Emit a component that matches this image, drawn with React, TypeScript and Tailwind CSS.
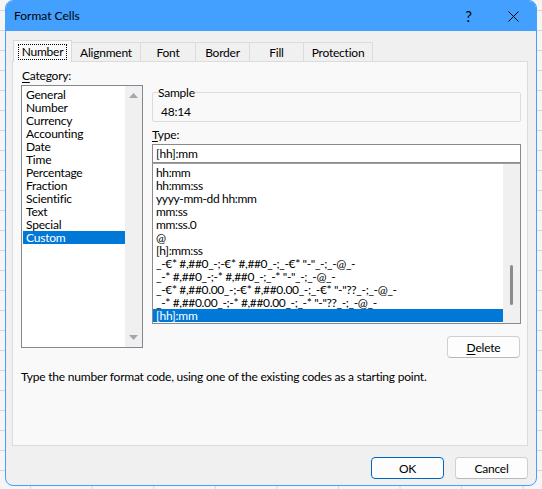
import type { ReactNode } from "react";

const categories = [
  "General",
  "Number",
  "Currency",
  "Accounting",
  "Date",
  "Time",
  "Percentage",
  "Fraction",
  "Scientific",
  "Text",
  "Special",
  "Custom",
];

const typeCodes = [
  "hh:mm",
  "hh:mm:ss",
  "yyyy-mm-dd hh:mm",
  "mm:ss",
  "mm:ss.0",
  "@",
  "[h]:mm:ss",
  '_-€* #,##0_-;-€* #,##0_-;_-€* "-"_-;_-@_-',
  '_-* #,##0_-;-* #,##0_-;_-* "-"_-;_-@_-',
  '_-€* #,##0.00_-;-€* #,##0.00_-;_-€* "-"??_-;_-@_-',
  '_-* #,##0.00_-;-* #,##0.00_-;_-* "-"??_-;_-@_-',
  "[hh]:mm",
];

const tabs = [
  { label: "Number", width: "w-[59px]" },
  { label: "Alignment", width: "w-[70px]" },
  { label: "Font", width: "w-[56px]" },
  { label: "Border", width: "w-[55px]" },
  { label: "Fill", width: "w-[55px]" },
  { label: "Protection", width: "w-[70px]" },
];

function Key({ children }: { children: ReactNode }) {
  return <span className="underline underline-offset-[2px]">{children}</span>;
}

function DialogButton({
  children,
  primary,
}: {
  children: ReactNode;
  primary?: boolean;
}) {
  return (
    <button
      className={
        primary
          ? "flex h-[22px] w-[73px] items-center justify-center rounded-[4px] border border-[#0067c0] bg-[#fdfdfd] leading-[13px]"
          : "flex h-[22px] w-[73px] items-center justify-center rounded-[4px] border border-[#d0d0d0] border-b-[#b9b9b9] bg-[#fdfdfd] leading-[13px]"
      }
    >
      {children}
    </button>
  );
}

export default function App() {
  return (
    <div className="h-[489px] w-[542px] overflow-hidden bg-[#f5f5f5] bg-[linear-gradient(to_bottom,#d6d6d6_1px,transparent_1px),linear-gradient(to_right,#d6d6d6_1px,transparent_1px)] bg-size-[61.6px_20px] bg-position-[30px_10px] px-[5px] font-['Segoe_UI',Lato,sans-serif] text-[12px] tracking-[-0.22px] text-black">
      <div className="flex h-[486px] w-[532px] flex-col overflow-hidden rounded-[8px] border border-[#43a0fe] bg-[#f0f0f0]">
        {/* Title bar */}
        <div className="flex h-[30px] shrink-0 items-center bg-[#43a0fe] pl-[8px]">
          <span className="text-[12px] tracking-normal">Format Cells</span>
          <span className="ml-auto flex w-[45px] justify-center text-[15px] leading-none">?</span>
          <span className="flex w-[45px] justify-center">
            <svg width="11" height="11" viewBox="0 0 11 11">
              <path d="M0.5 0.5 L10.5 10.5 M10.5 0.5 L0.5 10.5" stroke="#000" strokeWidth="1" />
            </svg>
          </span>
        </div>

        {/* Tabs */}
        <div className="mt-[9px] flex h-[21px] items-end pl-[7px]">
          {tabs.map((t, i) =>
            i === 0 ? (
              <div
                key={t.label}
                className={`relative z-10 mb-[-1px] flex h-[22px] ${t.width} items-center justify-center border border-b-0 border-[#d9d9d9] bg-[#f9f9f9]`}
              >
                <span className="border border-dotted border-black px-[3px] leading-[14px]">
                  {t.label}
                </span>
              </div>
            ) : (
              <div
                key={t.label}
                className={`-ml-px flex h-[19px] ${t.width} items-center justify-center border border-b-0 border-[#dcdcdc] bg-[#f0f0f0] leading-[13px]`}
              >
                {t.label}
              </div>
            ),
          )}
        </div>

        {/* Tab panel */}
        <div className="ml-[6px] mr-[8px] flex h-[385px] flex-col border border-[#dcdcdc] bg-[#f9f9f9] pl-[8px] pt-[7px]">
          <div className="flex items-start">
            {/* Category */}
            <div className="w-[122px]">
              <div className="h-[13px] pl-[1px] leading-[13px]">
                <Key>C</Key>ategory:
              </div>
              <div className="mt-[3px] flex h-[263px] border border-[#828790] bg-white">
                <div className="flex-1 pl-[1px] pt-[2px]">
                  {categories.map((c) => (
                    <div
                      key={c}
                      className={
                        c === "Custom"
                          ? "h-[13px] bg-[#0078d7] pl-[3px] leading-[13px] text-white"
                          : "h-[13px] pl-[3px] leading-[13px]"
                      }
                    >
                      {c}
                    </div>
                  ))}
                </div>
                <div className="flex w-[17px] flex-col items-center justify-between bg-[#f0f0f0] py-[7px]">
                  <svg width="9" height="5" viewBox="0 0 9 5">
                    <path d="M4.5 0 L9 5 L0 5 Z" fill="#a6a6a6" />
                  </svg>
                  <svg width="9" height="5" viewBox="0 0 9 5">
                    <path d="M0 0 L9 0 L4.5 5 Z" fill="#a6a6a6" />
                  </svg>
                </div>
              </div>
            </div>

            {/* Sample + Type */}
            <div className="ml-[9px] mt-[17px] flex w-[369px] flex-col">
              <fieldset className="rounded-[2px] border border-[#dcdcdc] pb-[3px] pl-[5px]">
                <legend className="leading-[13px]">Sample</legend>
                <div className="pl-[3px] pt-[6px] leading-[13px]">48:14</div>
              </fieldset>

              <div className="mt-[6px] h-[13px] leading-[13px]">
                <Key>T</Key>ype:
              </div>
              <div className="mt-[3px] flex h-[19px] items-center border border-[#8a8a8a] bg-white pl-[3px]">
                [hh]:mm
              </div>
              <div className="flex h-[161px] border border-[#8a8a8a] border-t-[#a0a0a0] bg-white">
                <div className="flex-1 overflow-hidden pt-[2px]">
                  {typeCodes.map((code, i) => (
                    <div
                      key={code}
                      className={
                        i === typeCodes.length - 1
                          ? "h-[13px] whitespace-pre bg-[#0078d7] pl-[3px] leading-[13px] text-white"
                          : "h-[13px] whitespace-pre pl-[3px] leading-[13px] tracking-[-0.35px]"
                      }
                    >
                      {code}
                    </div>
                  ))}
                </div>
                <div className="flex w-[17px] flex-col items-center bg-[#f0f0f0] pt-[101px]">
                  <div className="h-[40px] w-[3px] rounded-full bg-[#8b8b8b]" />
                </div>
              </div>

              <div className="mr-[1px] mt-[12px] self-end">
                <DialogButton>
                  <Key>D</Key>elete
                </DialogButton>
              </div>
            </div>
          </div>

          <div className="mt-[12px] leading-[13px]">
            Type the number format code, using one of the existing codes as a starting point.
          </div>
        </div>

        {/* Footer buttons */}
        <div className="mr-[8px] mt-[11px] flex justify-end gap-[11px]">
          <DialogButton primary>OK</DialogButton>
          <DialogButton>Cancel</DialogButton>
        </div>
      </div>
    </div>
  );
}
